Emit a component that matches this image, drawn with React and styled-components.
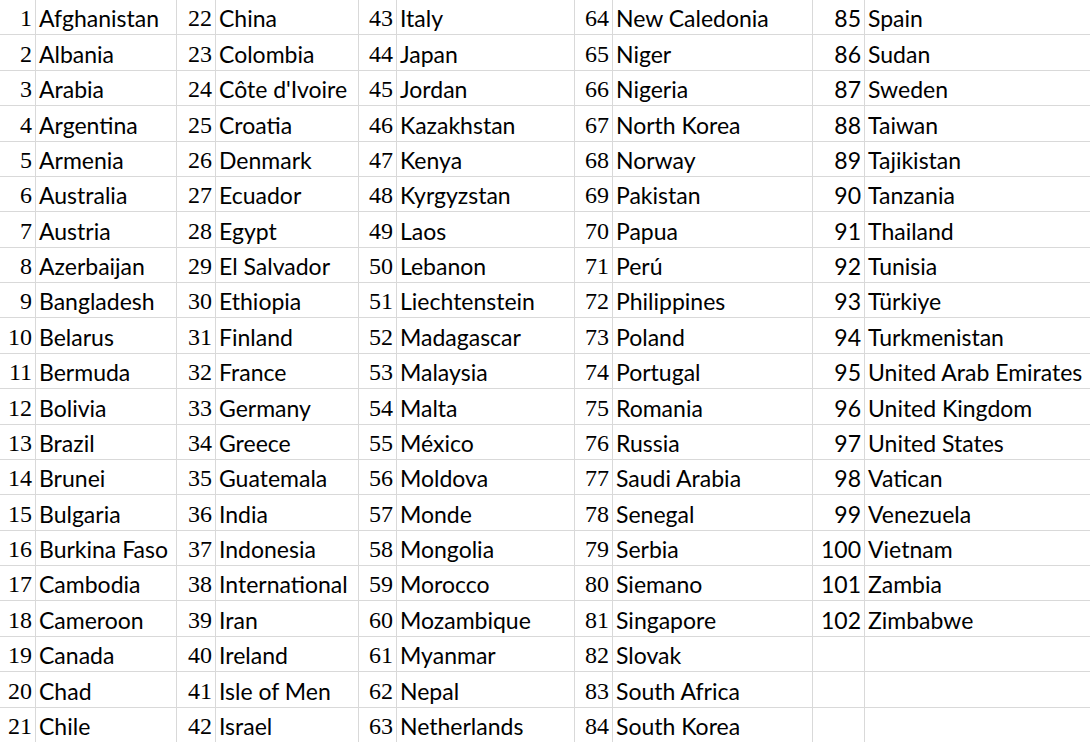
import React from 'react';
import styled, { createGlobalStyle } from 'styled-components';

const Global = createGlobalStyle`
  html, body {
    margin: 0;
    padding: 0;
    background: #ffffff;
    overflow: hidden;
  }
`;

const countries = [
  'Afghanistan', 'Albania', 'Arabia', 'Argentina', 'Armenia', 'Australia', 'Austria',
  'Azerbaijan', 'Bangladesh', 'Belarus', 'Bermuda', 'Bolivia', 'Brazil', 'Brunei',
  'Bulgaria', 'Burkina Faso', 'Cambodia', 'Cameroon', 'Canada', 'Chad', 'Chile',
  'China', 'Colombia', "Côte d'Ivoire", 'Croatia', 'Denmark', 'Ecuador', 'Egypt',
  'El Salvador', 'Ethiopia', 'Finland', 'France', 'Germany', 'Greece', 'Guatemala',
  'India', 'Indonesia', 'International', 'Iran', 'Ireland', 'Isle of Men', 'Israel',
  'Italy', 'Japan', 'Jordan', 'Kazakhstan', 'Kenya', 'Kyrgyzstan', 'Laos', 'Lebanon',
  'Liechtenstein', 'Madagascar', 'Malaysia', 'Malta', 'México', 'Moldova', 'Monde',
  'Mongolia', 'Morocco', 'Mozambique', 'Myanmar', 'Nepal', 'Netherlands',
  'New Caledonia', 'Niger', 'Nigeria', 'North Korea', 'Norway', 'Pakistan', 'Papua',
  'Perú', 'Philippines', 'Poland', 'Portugal', 'Romania', 'Russia', 'Saudi Arabia',
  'Senegal', 'Serbia', 'Siemano', 'Singapore', 'Slovak', 'South Africa', 'South Korea',
  'Spain', 'Sudan', 'Sweden', 'Taiwan', 'Tajikistan', 'Tanzania', 'Thailand', 'Tunisia',
  'Türkiye', 'Turkmenistan', 'United Arab Emirates', 'United Kingdom', 'United States',
  'Vatican', 'Venezuela', 'Vietnam', 'Zambia', 'Zimbabwe',
];

const ROWS = 21;
const GROUPS = 5;

const Sheet = styled.div`
  display: grid;
  grid-template-columns: 36px 141px 39px 143px 38px 178px 38px 200px 52px 225px;
  grid-template-rows: repeat(${ROWS}, 35.38px);
  width: 1090px;
`;

const Cell = styled.div`
  box-sizing: border-box;
  display: flex;
  align-items: flex-end;
  padding-bottom: 4px;
  border-right: ${(p) => (p.$last ? 'none' : '1px solid #d9d9d9')};
  border-bottom: 1px solid #d9d9d9;
  color: #000;
  white-space: nowrap;
  overflow: visible;
`;

const NumCell = styled(Cell)`
  justify-content: flex-end;
  padding-right: 3px;
  font-family: ${(p) => (p.$serif ? '"Liberation Serif", "Times New Roman", serif' : 'Lato, "Open Sans", sans-serif')};
  font-size: ${(p) => (p.$serif ? '24px' : '23px')};
  line-height: 1;
`;

const NameCell = styled(Cell)`
  padding-left: 3px;
  font-family: Lato, "Open Sans", sans-serif;
  font-size: 23px;
  line-height: 1;
`;

export default function App() {
  const cells = [];
  for (let r = 0; r < ROWS; r++) {
    for (let g = 0; g < GROUPS; g++) {
      const i = g * ROWS + r;
      const name = countries[i];
      cells.push(
        <NumCell key={`n${r}-${g}`} $serif={g < 4}>
          {name ? i + 1 : ''}
        </NumCell>,
        <NameCell key={`c${r}-${g}`} $last={g === GROUPS - 1}>
          {name || ''}
        </NameCell>
      );
    }
  }
  return (
    <>
      <Global />
      <Sheet>{cells}</Sheet>
    </>
  );
}
